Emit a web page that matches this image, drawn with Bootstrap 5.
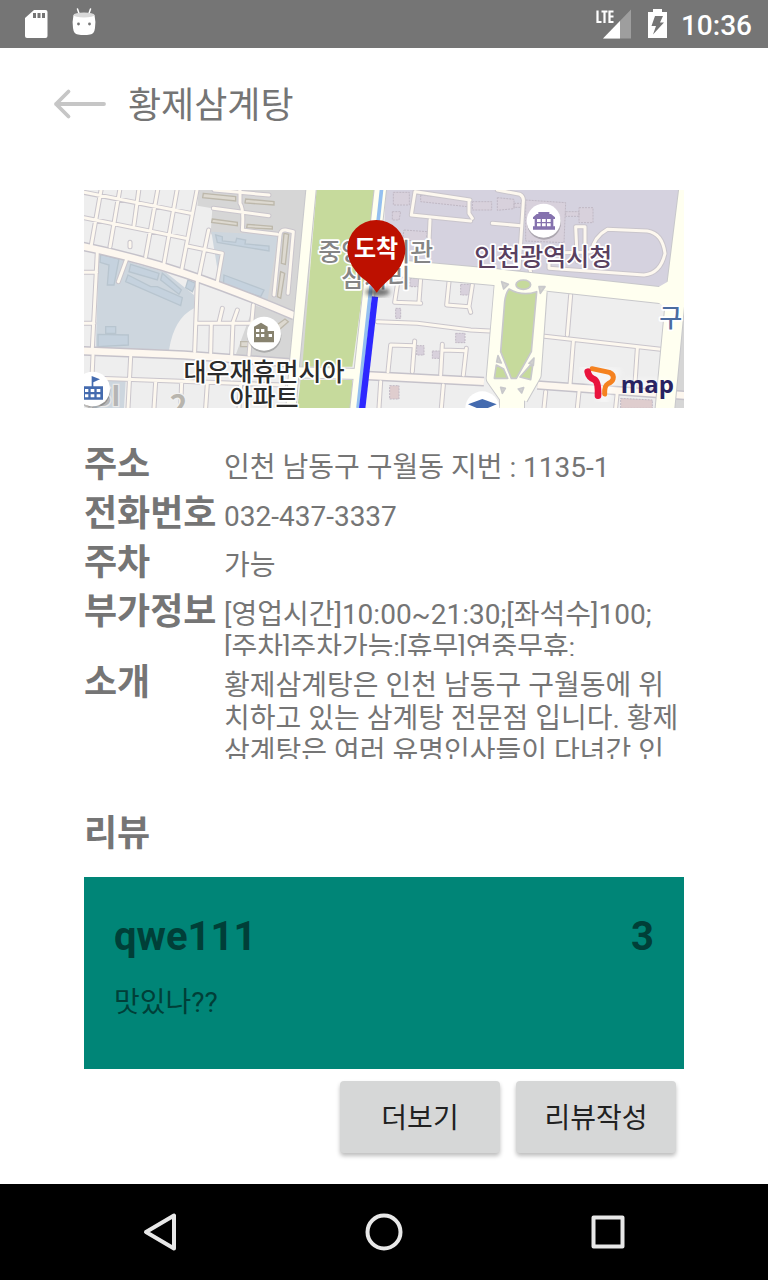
<!DOCTYPE html>
<html lang="ko">
<head>
<meta charset="utf-8">
<meta name="viewport" content="width=device-width, initial-scale=1">
<title>황제삼계탕</title>
<link href="https://cdn.jsdelivr.net/npm/bootstrap@5.3.0/dist/css/bootstrap.min.css" rel="stylesheet">
<style>
  body { font-family: Roboto, "Noto Sans CJK KR", sans-serif; color: #757575; background: #fff; }
  .status-bar { height: 48px; background: #757575; color: #fff; padding: 0 16px 0 20px; }
  .status-time { font-size: 28px; line-height: 44px; padding-top: 4px; font-weight: 500; margin-left: 12px; }
  .title-bar { height: 112px; padding-left: 48px; }
  .place-name { font-size: 36px; line-height: 44px; font-weight: 400; margin: 0 0 0 16px; padding-top: 4px; }
  .page-body { padding: 30px 84px 0; }
  .map-view { margin-bottom: 31px; }
  .map-view text { font-family: "Noto Sans CJK KR", sans-serif; }
  .map-view .map-logo { font-family: "Open Sans", sans-serif; }
  .battery { margin-left: 11px; }
  .info { display: grid; grid-template-columns: 140px 1fr; }
  .info dt, .section-title { font-size: 36px; line-height: 45px; padding-top: 4px; font-weight: 700; margin: 0; white-space: nowrap; }
  .info dd { font-size: 28px; line-height: 33px; padding-top: 12px; margin: 0; overflow: hidden; }
  .info .extra { height: 70px; margin-bottom: 1px; }
  .info .intro { height: 102px; }
  .section-title { margin: 49px 0 20px; }
  .review { background: #008577; color: #003f38; padding: 36px 30px 48px; }
  .review-head { font-size: 40px; line-height: 48px; font-weight: 700; }
  .review-text { font-size: 28px; line-height: 36px; margin: 24px 0 0; }
  .btn-flat { background: #d6d7d7; color: #212121; font-size: 28px; line-height: 40px; width: 160px; height: 72px; padding: 4px 0 0; border: 0; border-radius: 4px; box-shadow: 0 3px 4px rgba(0,0,0,.26); }
  .btn-flat:hover { background: #c9caca; }
  .nav-keys { background: #000; gap: 128px; }
  .nav-keys button { width: 96px; height: 96px; }
</style>
</head>
<body class="d-flex flex-column min-vh-100">

<div class="status-bar d-flex align-items-center">
  <svg width="32" height="48" viewBox="0 0 32 48" aria-hidden="true">
    <path fill="#fff" d="M14 10h11.500a2 2 0 0 1 2 2v24a2 2 0 0 1-2 2H7a2 2 0 0 1-2-2V18z"/>
    <path fill="#757575" d="M13 13h3v5h-3zM17.500 13h3v5h-3zM22 13h3v5h-3z"/>
  </svg>
  <svg class="ms-3" width="32" height="48" viewBox="0 0 32 48" aria-hidden="true">
    <path stroke="#fff" stroke-width="1.500" stroke-linecap="round" d="M9.500 9l1.700 5M22.500 9l-1.700 5"/>
    <path fill="#fff" d="M5.500 15Q4 22 5 28q.7 6 5 6.500 6 1 12 0 4.300-.5 5-6.500 1-6-.5-13z"/>
    <ellipse cx="16" cy="15" rx="10.500" ry="2.500" fill="#d9d9d9"/>
    <circle cx="10.500" cy="24" r="1.400" fill="#757575"/><circle cx="21.500" cy="24" r="1.400" fill="#757575"/>
  </svg>
  <svg class="ms-auto" width="40" height="48" viewBox="0 0 40 48" role="img" aria-label="LTE">
    <path fill="#fff" opacity=".3" d="M35 9.500v29H7z"/>
    <path fill="#fff" d="M24 21v17.500H7z"/>
    <path fill="none" stroke="#fff" stroke-width="2.200" d="M1.500 10.500V22h4M5.500 11.500h6M8.500 11.500V23M17.500 11.500h-4V22h4M13.500 16.500h4"/>
  </svg>
  <svg class="battery" width="22" height="48" viewBox="0 0 22 48" aria-hidden="true">
    <path fill="#fff" d="M6 9h9v3h5v26H1V12h5z"/>
    <path fill="#757575" d="M8 16h8l-3 6.500h4L6 34.500 9 26H4.500z"/>
  </svg>
  <span class="status-time">10:36</span>
</div>

<header class="title-bar d-flex align-items-center">
  <button type="button" class="btn p-0 border-0" aria-label="뒤로">
    <svg class="d-block" width="64" height="40" viewBox="0 0 64 40" fill="none" stroke="#c6c6c6" stroke-width="3.800" stroke-linecap="round" stroke-linejoin="round"><path d="M56 20H8M20.500 7.500L8 20l12.500 12.500"/></svg>
  </button>
  <h1 class="place-name">황제삼계탕</h1>
</header>

<main class="page-body flex-grow-1">
  <svg class="map-view d-block w-100" viewBox="0 15 1800 654" role="img" aria-label="지도">
    <defs>
      <filter id="pinShade"><feGaussianBlur stdDeviation="7"/></filter>
      <filter id="logoGlow"><feGaussianBlur stdDeviation="9"/></filter>
      <g id="lanes" fill="none" stroke-linecap="round" stroke-linejoin="round">
        <path d="M0 22L320 85M0 98L305 160M52 10L22 180M108 10L78 185M165 10L150 120M222 10L185 215M280 10L240 235M340 10L293 255M310 183L415 205 400 290M374 135L345 275M138 172V185M128 222L103 290M40 200L25 490M0 262H38M0 415H30M340 290L332 500M340 415H510M382 418L380 505M415 370L405 412M460 375L447 412 443 510M508 360L495 510M27 510L20 669M0 578L600 600M140 515L132 669M215 590L210 669M293 590L290 669M370 595L365 669M470 600L465 669"/>
        <path d="M390 15L555 30M468 15V55Q480 70 475 135L580 148M388 70L555 92M570 330L588 150Q590 133 605 135L628 140 612 325"/>
        <path d="M995 20L1158 45M993 20L982 90 1160 108M1155 45V85L1165 100M1038 105L1035 170M940 300L932 352 1010 355M1010 280L1005 350M1095 290L1088 360 1155 365 1160 382M1165 300L1155 365M880 410L1000 415 1160 435 1260 440M912 560L920 480 990 482M992 468L985 560M1075 478L1070 570M1075 495L1145 497M1147 490L1138 570M890 590L885 669M1078 600L1072 669"/>
        <path d="M1225 115L1310 122M1240 15L1308 28Q1320 35 1318 50L1305 250M1480 230L1475 125H1503V210M1335 240L1340 262M1395 215V250L1680 270Q1730 265 1743 205 1735 145 1690 138L1570 133Q1530 155 1522 200L1395 205M1460 330L1450 450M1375 453L1730 493M1468 470L1458 600M1660 490L1652 610M1385 620L1380 669M1485 620L1480 669M1600 620L1595 669"/>
      </g>
      <g id="avenues" fill="none" stroke-linejoin="round">
        <path d="M-10 183Q150 215 300 265T630 392"/>
        <path d="M-10 497L300 510 640 535"/>
        <path d="M850 572L1200 590M1360 600L1810 632"/>
      </g>
    </defs>
    <path fill="#eee" d="M0 15h1800v654H0z"/>
    <path fill="#d6d6d6" d="M345 10H690L655 669 640 535 455 510 510 360 600 390 550 345 380 145 385 70 340 62z"/>
    <path fill="#cdd6de" d="M45 205L245 262 330 330V370Q270 400 255 495L35 490zM382 140L582 150 550 350 408 300zM55 588H125L120 669H20z"/>
    <path fill="#d5d2df" d="M905 10H1800L1745 310 1240 265 930 235 900 160z"/>
    <path fill="#d6d6d6" d="M1770 360H1800V669H1750z"/>
    <path fill="#c6da9c" d="M698 10H872L855 180 805 545H655z"/>
    <path fill="#c6da9c" d="M650 585H805L800 669H640z"/>

    <g fill="#c5d2de" stroke="#b8c5cf" stroke-width="4">
      <path d="M50 208L105 222 90 300H70L75 240 48 232zM140 238L225 265 220 285 135 260zM132 270L200 305 220 305 295 338 290 362 125 290zM235 265L292 315 285 328 230 285zM312 285L335 295 325 320 305 308zM42 448L133 450V480L42 485zM395 150L415 155V168L455 172 458 160 485 165 483 177 555 183V198L400 172zM420 270L540 315 530 335 418 300zM65 425h30v20h-30z"/>
    </g>
    <g fill="#ddd9d0" stroke="#bdb8ab" stroke-width="4">
      <path d="M358 25L455 35V48L356 38zM485 42L570 50V60L483 54zM385 102L460 112V122L383 112zM490 118L565 124V132L488 128zM470 470h30v15h-30zM600 145l14 3-10 90-12-3zM590 260l12 5-12 75-10-5zM578 420l25-18 10 8-25 22z"/>
    </g>
    <g fill="#d8d1dc" stroke="#c0b8c4" stroke-width="3" stroke-dasharray="6 3">
      <path d="M928 22h48v38h-48zM925 80h25l-5 25h-20zM960 135l70 5-5 30-70-5zM1010 30l140 15v20l-140-15zM1165 50h58v25h-58zM1240 38l50 5v28l-50 5zM1290 55h35v12h-35zM1325 45l120 8-5 120-115-5zM1485 68h42v45h-42zM1445 80h40v14h-40zM978 280h28v25h-28zM1130 298h30v32h-30zM935 370h15v30h-15zM1115 445h28v28h-28zM998 482h22v28h-22zM1045 498h22v22h-22z"/>
      <path fill="#dfcdce" d="M917 602h28v40h-28zM1610 640l95 5v25h-95z"/>
    </g>

    <use href="#lanes" stroke="#c9c5cc" stroke-width="15"/>
    <use href="#avenues" stroke="#c5c2ca" stroke-width="29"/>
    <use href="#lanes" stroke="#fdf8ef" stroke-width="9"/>
    <use href="#avenues" stroke="#fdf7ef" stroke-width="20"/>
    <g fill="none" stroke="#c8c8cb" stroke-linejoin="round">
      <path stroke-width="34" d="M682 5L632 530 620 680"/>
      <path stroke-width="40" d="M890 5L868 200 815 680"/>
      <path stroke-width="36" d="M632 562L850 568"/>
      <path stroke-width="54" d="M940 250L1240 277 1770 335"/>
      <path stroke-width="46" d="M1253 290L1228 580 1270 640M1368 320L1350 570 1310 640"/>
      <path stroke-width="78" d="M1284 610V680"/>
      <path stroke-width="62" d="M1814 10L1778 300 1742 680"/>
    </g>
    <g fill="none" stroke="#fffff0" stroke-linejoin="round">
      <path stroke-width="28" d="M682 5L632 530 620 680"/>
      <path stroke-width="34" d="M890 5L868 200 815 680"/>
      <path stroke-width="30" d="M632 562L850 568"/>
      <path stroke-width="48" d="M940 250L1240 277 1770 335"/>
      <path stroke-width="40" d="M1253 285L1228 580 1270 640M1368 315L1350 570 1310 640"/>
      <path stroke-width="72" d="M1284 610V680"/>
      <path stroke-width="56" d="M1814 10L1778 300 1742 680"/>
    </g>
    <path fill="#fffff0" d="M1248 285H1378L1350 600 1310 650H1260L1225 580zM1725 305L1760 285V380L1720 350z"/>
    <g fill="#c6da9c" stroke="#c8c8cb" stroke-width="5" stroke-linejoin="round">
      <path d="M1275 312Q1315 335 1358 320L1342 500 1297 580H1282L1250 500 1262 350Q1265 325 1275 312z"/>
      <ellipse cx="1318" cy="299" rx="22" ry="14"/>
      <path d="M1237 540l22 12 12 28h-40zM1338 542l8 0-6 42-32-8z"/>
      <path fill="#d2d2cf" d="M1253 290l20 8-14 14zM1365 305h18l-14 20zM1242 512l10 22-14-3zM1335 535l15-16-2 22zM1250 607l14 3-9 15zM1303 612l16-4-6 16z"/>
    </g>
    <path fill="none" stroke="#94c0f0" stroke-width="11" d="M893 10L868 240 822 669"/>
    <path fill="none" stroke="#2d28ff" stroke-width="19" d="M873 335L834 675"/>

    <text x="56" y="662" text-anchor="middle" font-size="84" font-weight="700" fill="#b5b5b5" stroke="#e9e9e9" stroke-width="8" paint-order="stroke">.SI</text>
    <text x="284" y="692" text-anchor="middle" font-size="90" font-weight="700" fill="#b8b5ae" stroke="#f1f1f1" stroke-width="8" paint-order="stroke">2</text>

    <g text-anchor="middle" font-size="75" font-weight="500" stroke="#fff" stroke-width="10" stroke-linejoin="round" paint-order="stroke">
      <text x="540" y="587" fill="#2b2b2b">대우재휴먼시아</text>
      <text x="540" y="665" fill="#2b2b2b">아파트</text>
      <text x="875" y="227" fill="#858585">중앙도서관</text>
      <text x="875" y="307" fill="#858585">삼거리</text>
      <text x="1378" y="242" fill="#59405f">인천광역시청</text>
      <text x="1760" y="427" fill="#4b6ca0">구</text>
    </g>

    <g fill="#000" opacity=".2"><circle cx="541" cy="452" r="51"/><circle cx="26" cy="617" r="53"/><circle cx="1380" cy="113" r="51"/></g>
    <g fill="#fff"><circle cx="540" cy="446" r="51"/><circle cx="26" cy="612" r="52"/><circle cx="1379" cy="107" r="51"/><circle cx="1195" cy="670" r="51"/></g>
    <path fill="#88836f" d="M510 472V425L531 413 551 425V438H570V472z"/>
    <path fill="#fff" d="M516 432h10v9h-10zM531 432h10v9h-10zM516 447h10v9h-10zM531 447h10v9h-10zM554 447h10v9h-10z"/>
    <path fill="#446baf" d="M0 604H23V573L48 583 28 592V604H57V644H0z"/>
    <path fill="#fff" d="M3 612h10v9H3zM20 612h11v9H20zM38 612h11v9H38zM3 628h10v9H3zM20 628h11v9H20zM38 628h11v9H38z"/>
    <path fill="#8572ae" d="M1347 97L1358 87H1363V81H1396V87H1401L1413 97V102H1408V124H1413V134H1347V124H1352V102H1347z"/>
    <path fill="#fff" d="M1359 102h11v9h-11zM1374 102h11v9h-11zM1389 102h11v9h-11zM1359 115h11v9h-11zM1374 115h11v9h-11zM1389 115h11v9h-11z"/>
    <path fill="#446baf" d="M1152 658L1195 642 1238 658 1195 676z"/>

    <ellipse cx="881" cy="321" rx="37" ry="13" fill="#333" opacity=".65" filter="url(#pinShade)"/>
    <path fill="#bd1000" d="M878 323Q862 298 830 275 790 235 790 192A87 87 0 0 1 964 192Q964 235 925 275 893 302 878 323z"/>
    <text x="876" y="215" text-anchor="middle" font-size="72" font-weight="700" fill="#fff">도착</text>

    <g stroke="#fff" stroke-width="30" opacity=".5" filter="url(#logoGlow)"><path fill="#fff" d="M1510 555L1590 565 1560 640 1530 590zM1620 600H1760"/></g>
    <g fill="none" stroke-linecap="round" stroke-linejoin="round">
      <path stroke="#f58220" stroke-width="15" d="M1524 551L1576 562Q1591 568 1587 583 1584 592 1572 596 1561 601 1562 627"/>
      <path stroke="#e9143d" stroke-width="20" d="M1511 560Q1514 577 1530 583 1544 590 1542 632"/>
    </g>
    <text class="map-logo" x="1610" y="624" font-size="72" font-weight="700" fill="#282361">map</text>
  </svg>

  <dl class="info mb-0">
    <dt>주소</dt><dd>인천 남동구 구월동 지번 : 1135-1</dd>
    <dt>전화번호</dt><dd>032-437-3337</dd>
    <dt>주차</dt><dd>가능</dd>
    <dt>부가정보</dt><dd class="extra">[영업시간]10:00~21:30;[좌석수]100;<br>[주차]주차가능;[휴무]연중무휴;</dd>
    <dt>소개</dt><dd class="intro">황제삼계탕은 인천 남동구 구월동에 위<br>치하고 있는 삼계탕 전문점 입니다. 황제<br>삼계탕은 여러 유명인사들이 다녀간 인</dd>
  </dl>

  <h2 class="section-title">리뷰</h2>
  <article class="review">
    <div class="review-head d-flex justify-content-between"><span>qwe111</span><span>3</span></div>
    <p class="review-text">맛있나??</p>
  </article>
  <div class="d-flex justify-content-end gap-3 pe-2 mt-2 pt-1">
    <button type="button" class="btn btn-flat">더보기</button>
    <button type="button" class="btn btn-flat">리뷰작성</button>
  </div>
</main>

<nav class="nav-keys d-flex justify-content-center" aria-label="시스템 탐색">
  <button type="button" class="btn p-0 border-0" aria-label="뒤로"><svg width="48" height="48" viewBox="0 0 48 48" fill="none" stroke="#e8e8e8" stroke-width="4" stroke-linejoin="round"><path d="M38 7.500V40.500L10 24z"/></svg></button>
  <button type="button" class="btn p-0 border-0" aria-label="홈"><svg width="48" height="48" viewBox="0 0 48 48" fill="none" stroke="#e8e8e8" stroke-width="4"><circle cx="24" cy="24" r="16.500"/></svg></button>
  <button type="button" class="btn p-0 border-0" aria-label="최근 앱"><svg width="48" height="48" viewBox="0 0 48 48" fill="none" stroke="#e8e8e8" stroke-width="4" stroke-linejoin="round"><path d="M9.500 9.500h29v29h-29z"/></svg></button>
</nav>

<script src="https://cdn.jsdelivr.net/npm/bootstrap@5.3.0/dist/js/bootstrap.bundle.min.js"></script>
</body>
</html>
